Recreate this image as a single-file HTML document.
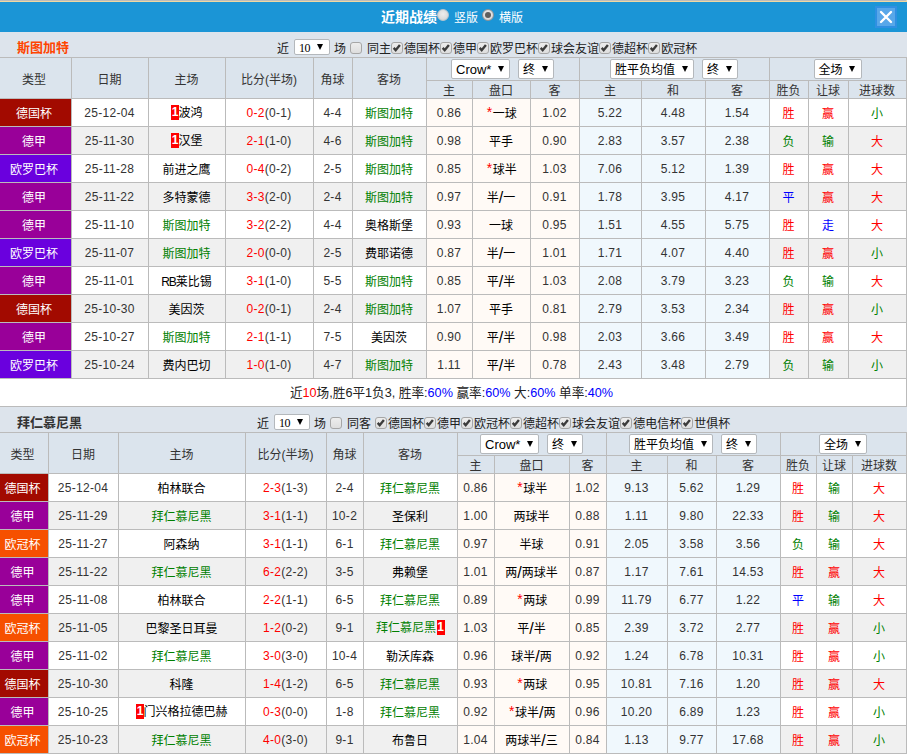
<!DOCTYPE html>
<html lang="zh-CN">
<head>
<meta charset="utf-8">
<title>近期战绩</title>
<style>
html,body{margin:0;padding:0;background:#fff;}
body{width:907px;height:755px;overflow:hidden;position:relative;font-family:"Liberation Sans","Noto Sans CJK SC",sans-serif;font-size:12px;color:#333;}
.topline{height:1px;background:#bcbcbc;border-bottom:1px solid #f0d8a2;border-right:1px solid #f0d8a2;}
.bar{position:relative;height:30px;background:#1b95d6;color:#fff;}
.bar .bt{position:absolute;left:381px;top:5px;font-size:14px;font-weight:bold;line-height:20px;}
.bar .rl{position:absolute;top:6px;font-size:12px;line-height:20px;}
.bar .l1{left:454px;}
.bar .l2{left:499px;}
.bar .rd{position:absolute;top:7px;width:12px;height:12px;border-radius:50%;background:radial-gradient(circle at 50% 40%,#ededed 0,#dcdcdc 60%,#c4c4c4 100%);border:1px solid #b9c6cf;box-sizing:border-box;}
.bar .rd.on{border-color:#8d9499;}
.bar .r1{left:437px;}
.bar .r2{left:482px;}
.bar .rd.on:after{content:"";position:absolute;left:2px;top:2px;width:6px;height:6px;border-radius:50%;background:#5e5e5e;}
.close{position:absolute;left:875px;top:4px;width:22px;height:22px;background:#58a7e9;border:2px solid #2f90e2;box-sizing:border-box;}
.close svg{position:absolute;left:-2px;top:-2px;}
.sec{position:relative;height:25px;background:#dde4ec;}
.sec .name{position:absolute;left:17px;top:7px;font-size:13px;font-weight:bold;line-height:18px;}
.n1{color:#ff4500;}
.n2{color:#333;}
.filt{position:absolute;top:5px;height:25px;line-height:25px;white-space:nowrap;color:#222;}
.f1{left:277px;}
.f2{left:257px;}
.filt span{vertical-align:middle;}
.filt .s-n{margin-left:5px;width:36px;height:16px;font-size:12px;letter-spacing:-0.6px;font-family:"Liberation Serif",serif;top:-3px;margin-right:-1px;}
.filt .f-c{margin-left:5px;}
.filt .f-c + .cb{margin-left:4px;margin-right:5px;}
.filt .f-t2{margin-right:4px;}
.s2{border-top:1px solid #bbb;}
table.t{border-collapse:collapse;table-layout:fixed;margin-left:-1px;width:908px;}
.t th,.t td{border:1px solid #bbb;padding:0 1px 0 0;text-align:center;font-weight:normal;white-space:nowrap;overflow:hidden;}
.t th{background:#dbe4ed;color:#333;}
.t tr.h1{height:23px;}
.t tr.h2{height:18px;}
.t td{height:27px;color:#333;}
.t tr.even td{background:#f0f0f0;}
.t td.lg{color:#fff;padding-right:3px;}
.t tr.h1 th:first-child{padding-right:3px;}
.t td.c-dgb{background:#a20a00 !important;}
.t td.c-dj{background:#990099 !important;}
.t td.c-olb{background:#6a00de !important;}
.t td.c-ogb{background:#f65000 !important;}
.t td.n{letter-spacing:0.3px;}
.t td.me{color:#008000;}
.t td.tm{color:#000;}
.sc{color:#f00;}
.star{color:#f00;font-size:14px;line-height:12px;display:inline-block;vertical-align:-0.5px;width:6.5px;text-align:center;margin-left:1px;position:relative;top:-2px;}
.rc{background:#f00;color:#fff;font-weight:bold;display:inline-block;width:8px;height:15px;line-height:15px;vertical-align:middle;text-align:center;position:relative;top:-2px;left:0.5px;letter-spacing:0;}
.lat{letter-spacing:-1px;}
.sl{font-size:16px;line-height:12px;display:inline-block;width:4.6px;text-align:center;position:relative;top:1px;}
.t td.oa{background:#fffaf6 !important;}
.t td.ob{background:#f0f8fd !important;}
.t td.r{color:#f00;}
.t td.g{color:#008000;}
.t td.b{color:#00f;}
.stat{height:27px;line-height:29px;font-size:12.65px;padding-right:3px;text-align:center;border-right:1px solid #bbb;color:#222;}
.red{color:#f00;}
.blue{color:#00f;}
.sel{display:inline-block;box-sizing:border-box;height:20px;border:1px solid #b4b8bc;border-radius:2px;background:#fff;vertical-align:middle;position:relative;text-align:left;color:#000;}
.sel .st{position:absolute;left:4px;top:1px;line-height:18px;}
.sel .ar{position:absolute;right:5.5px;top:6px;width:0;height:0;border-left:3.75px solid transparent;border-right:3.75px solid transparent;border-top:6.5px solid #000;}
.s-crow{width:59px;font-size:13px;}
.s-crow .st{left:4px;top:0.5px;}

.s-z{width:36px;margin-left:8px;}
.s-avg{width:84px;}
.s-qc{width:48px;}
.s-n .st{line-height:14px;left:4px;top:1.3px;}
.s-n .ar{top:4.5px;right:6px;border-left-width:3px;border-right-width:3px;}
.cb{display:inline-block;width:12px;height:12px;box-sizing:border-box;border:1px solid #a6a6a6;border-radius:3px;background:linear-gradient(#ededed,#dedede);vertical-align:middle;margin:0 1px 0 0;position:relative;top:-2px;}
.cb svg{position:absolute;left:-1px;top:-1px;}
</style>
</head>
<body>
<div class="topline"></div>
<div class="bar"><span class="bt">近期战绩</span><span class="rd r1"></span><span class="rl l1">竖版</span><span class="rd r2 on"></span><span class="rl l2">横版</span>
<span class="close"><svg viewBox="0 0 22 22" width="22" height="22"><path d="M6 6 L16 16 M16 6 L6 16" stroke="#fff" stroke-width="2.4" stroke-linecap="round" fill="none"/></svg></span></div>
<div class="sec s1"><span class="name n1">斯图加特</span><div class="filt f1"><span class="f-j">近</span><span class="sel s-n"><span class="st">10</span><i class="ar"></i></span><span class="f-c">场</span><span class="cb"></span><span class="f-t">同主</span><span class="cb on"><svg viewBox="0 0 12 12" width="12" height="12"><path d="M2.7 5.9 L4.7 8.2 L8.9 3.0" fill="none" stroke="#3c3c3c" stroke-width="2.4"/></svg></span>德国杯<span class="cb on"><svg viewBox="0 0 12 12" width="12" height="12"><path d="M2.7 5.9 L4.7 8.2 L8.9 3.0" fill="none" stroke="#3c3c3c" stroke-width="2.4"/></svg></span>德甲<span class="cb on"><svg viewBox="0 0 12 12" width="12" height="12"><path d="M2.7 5.9 L4.7 8.2 L8.9 3.0" fill="none" stroke="#3c3c3c" stroke-width="2.4"/></svg></span>欧罗巴杯<span class="cb on"><svg viewBox="0 0 12 12" width="12" height="12"><path d="M2.7 5.9 L4.7 8.2 L8.9 3.0" fill="none" stroke="#3c3c3c" stroke-width="2.4"/></svg></span>球会友谊<span class="cb on"><svg viewBox="0 0 12 12" width="12" height="12"><path d="M2.7 5.9 L4.7 8.2 L8.9 3.0" fill="none" stroke="#3c3c3c" stroke-width="2.4"/></svg></span>德超杯<span class="cb on"><svg viewBox="0 0 12 12" width="12" height="12"><path d="M2.7 5.9 L4.7 8.2 L8.9 3.0" fill="none" stroke="#3c3c3c" stroke-width="2.4"/></svg></span>欧冠杯</div></div>
<table class="t" id="t1" cellspacing="0" cellpadding="0">
<colgroup><col style="width:72px"><col style="width:77px"><col style="width:77px"><col style="width:88px"><col style="width:39px"><col style="width:74px"><col style="width:46px"><col style="width:58px"><col style="width:49px"><col style="width:62px"><col style="width:64px"><col style="width:64px"><col style="width:39px"><col style="width:40px"><col style="width:58px"></colgroup>
<tr class="h1">
<th rowspan="2">类型</th>
<th rowspan="2">日期</th>
<th rowspan="2">主场</th>
<th rowspan="2">比分(半场)</th>
<th rowspan="2">角球</th>
<th rowspan="2">客场</th>
<th colspan="3"><span class="sel s-crow"><span class="st">Crow*</span><i class="ar"></i></span><span class="sel s-z"><span class="st">终</span><i class="ar"></i></span></th>
<th colspan="3"><span class="sel s-avg"><span class="st">胜平负均值</span><i class="ar"></i></span><span class="sel s-z"><span class="st">终</span><i class="ar"></i></span></th>
<th colspan="3"><span class="sel s-qc"><span class="st">全场</span><i class="ar"></i></span></th>
</tr>
<tr class="h2"><th>主</th><th>盘口</th><th>客</th><th>主</th><th>和</th><th>客</th><th>胜负</th><th>让球</th><th>进球数</th></tr>
<tr class="odd">
<td class="lg c-dgb">德国杯</td>
<td class="n">25-12-04</td>
<td class="tm"><span class="rc">1</span>波鸿</td>
<td class="n"><span class="sc">0-2</span>(0-1)</td>
<td class="n">4-4</td>
<td class="me">斯图加特</td>
<td class="oa n">0.86</td><td class="oa tm"><span class="star">*</span>一球</td><td class="oa n">1.02</td>
<td class="ob n">5.22</td><td class="ob n">4.48</td><td class="ob n">1.54</td>
<td class="r">胜</td>
<td class="r">赢</td>
<td class="g">小</td>
</tr>
<tr class="even">
<td class="lg c-dj">德甲</td>
<td class="n">25-11-30</td>
<td class="tm"><span class="rc">1</span>汉堡</td>
<td class="n"><span class="sc">2-1</span>(1-0)</td>
<td class="n">4-6</td>
<td class="me">斯图加特</td>
<td class="oa n">0.98</td><td class="oa tm">平手</td><td class="oa n">0.90</td>
<td class="ob n">2.83</td><td class="ob n">3.57</td><td class="ob n">2.38</td>
<td class="g">负</td>
<td class="g">输</td>
<td class="r">大</td>
</tr>
<tr class="odd">
<td class="lg c-olb">欧罗巴杯</td>
<td class="n">25-11-28</td>
<td class="tm">前进之鹰</td>
<td class="n"><span class="sc">0-4</span>(0-2)</td>
<td class="n">2-5</td>
<td class="me">斯图加特</td>
<td class="oa n">0.85</td><td class="oa tm"><span class="star">*</span>球半</td><td class="oa n">1.03</td>
<td class="ob n">7.06</td><td class="ob n">5.12</td><td class="ob n">1.39</td>
<td class="r">胜</td>
<td class="r">赢</td>
<td class="r">大</td>
</tr>
<tr class="even">
<td class="lg c-dj">德甲</td>
<td class="n">25-11-22</td>
<td class="tm">多特蒙德</td>
<td class="n"><span class="sc">3-3</span>(2-0)</td>
<td class="n">2-4</td>
<td class="me">斯图加特</td>
<td class="oa n">0.97</td><td class="oa tm">半<span class="sl">/</span>一</td><td class="oa n">0.91</td>
<td class="ob n">1.78</td><td class="ob n">3.95</td><td class="ob n">4.17</td>
<td class="b">平</td>
<td class="r">赢</td>
<td class="r">大</td>
</tr>
<tr class="odd">
<td class="lg c-dj">德甲</td>
<td class="n">25-11-10</td>
<td class="me">斯图加特</td>
<td class="n"><span class="sc">3-2</span>(2-2)</td>
<td class="n">4-4</td>
<td class="tm">奥格斯堡</td>
<td class="oa n">0.93</td><td class="oa tm">一球</td><td class="oa n">0.95</td>
<td class="ob n">1.51</td><td class="ob n">4.55</td><td class="ob n">5.75</td>
<td class="r">胜</td>
<td class="b">走</td>
<td class="r">大</td>
</tr>
<tr class="even">
<td class="lg c-olb">欧罗巴杯</td>
<td class="n">25-11-07</td>
<td class="me">斯图加特</td>
<td class="n"><span class="sc">2-0</span>(0-0)</td>
<td class="n">2-5</td>
<td class="tm">费耶诺德</td>
<td class="oa n">0.87</td><td class="oa tm">半<span class="sl">/</span>一</td><td class="oa n">1.01</td>
<td class="ob n">1.71</td><td class="ob n">4.07</td><td class="ob n">4.40</td>
<td class="r">胜</td>
<td class="r">赢</td>
<td class="g">小</td>
</tr>
<tr class="odd">
<td class="lg c-dj">德甲</td>
<td class="n">25-11-01</td>
<td class="tm"><span class="lat">RB</span>莱比锡</td>
<td class="n"><span class="sc">3-1</span>(1-0)</td>
<td class="n">5-5</td>
<td class="me">斯图加特</td>
<td class="oa n">0.85</td><td class="oa tm">平<span class="sl">/</span>半</td><td class="oa n">1.03</td>
<td class="ob n">2.08</td><td class="ob n">3.79</td><td class="ob n">3.23</td>
<td class="g">负</td>
<td class="g">输</td>
<td class="r">大</td>
</tr>
<tr class="even">
<td class="lg c-dgb">德国杯</td>
<td class="n">25-10-30</td>
<td class="tm">美因茨</td>
<td class="n"><span class="sc">0-2</span>(0-1)</td>
<td class="n">2-4</td>
<td class="me">斯图加特</td>
<td class="oa n">1.07</td><td class="oa tm">平手</td><td class="oa n">0.81</td>
<td class="ob n">2.79</td><td class="ob n">3.53</td><td class="ob n">2.34</td>
<td class="r">胜</td>
<td class="r">赢</td>
<td class="g">小</td>
</tr>
<tr class="odd">
<td class="lg c-dj">德甲</td>
<td class="n">25-10-27</td>
<td class="me">斯图加特</td>
<td class="n"><span class="sc">2-1</span>(1-1)</td>
<td class="n">7-5</td>
<td class="tm">美因茨</td>
<td class="oa n">0.90</td><td class="oa tm">平<span class="sl">/</span>半</td><td class="oa n">0.98</td>
<td class="ob n">2.03</td><td class="ob n">3.66</td><td class="ob n">3.49</td>
<td class="r">胜</td>
<td class="r">赢</td>
<td class="r">大</td>
</tr>
<tr class="even">
<td class="lg c-olb">欧罗巴杯</td>
<td class="n">25-10-24</td>
<td class="tm">费内巴切</td>
<td class="n"><span class="sc">1-0</span>(1-0)</td>
<td class="n">4-7</td>
<td class="me">斯图加特</td>
<td class="oa n">1.11</td><td class="oa tm">平<span class="sl">/</span>半</td><td class="oa n">0.78</td>
<td class="ob n">2.43</td><td class="ob n">3.48</td><td class="ob n">2.79</td>
<td class="g">负</td>
<td class="g">输</td>
<td class="g">小</td>
</tr>
</table>
<div class="stat">近<span class="red">10</span>场,胜6平1负3, 胜率:<span class="blue">60%</span> 赢率:<span class="blue">60%</span> 大:<span class="blue">60%</span> 单率:<span class="blue">40%</span></div>
<div class="sec s2"><span class="name n2">拜仁慕尼黑</span><div class="filt f2"><span class="f-j">近</span><span class="sel s-n"><span class="st">10</span><i class="ar"></i></span><span class="f-c">场</span><span class="cb"></span><span class="f-t f-t2">同客</span><span class="cb on"><svg viewBox="0 0 12 12" width="12" height="12"><path d="M2.7 5.9 L4.7 8.2 L8.9 3.0" fill="none" stroke="#3c3c3c" stroke-width="2.4"/></svg></span>德国杯<span class="cb on"><svg viewBox="0 0 12 12" width="12" height="12"><path d="M2.7 5.9 L4.7 8.2 L8.9 3.0" fill="none" stroke="#3c3c3c" stroke-width="2.4"/></svg></span>德甲<span class="cb on"><svg viewBox="0 0 12 12" width="12" height="12"><path d="M2.7 5.9 L4.7 8.2 L8.9 3.0" fill="none" stroke="#3c3c3c" stroke-width="2.4"/></svg></span>欧冠杯<span class="cb on"><svg viewBox="0 0 12 12" width="12" height="12"><path d="M2.7 5.9 L4.7 8.2 L8.9 3.0" fill="none" stroke="#3c3c3c" stroke-width="2.4"/></svg></span>德超杯<span class="cb on"><svg viewBox="0 0 12 12" width="12" height="12"><path d="M2.7 5.9 L4.7 8.2 L8.9 3.0" fill="none" stroke="#3c3c3c" stroke-width="2.4"/></svg></span>球会友谊<span class="cb on"><svg viewBox="0 0 12 12" width="12" height="12"><path d="M2.7 5.9 L4.7 8.2 L8.9 3.0" fill="none" stroke="#3c3c3c" stroke-width="2.4"/></svg></span>德电信杯<span class="cb on"><svg viewBox="0 0 12 12" width="12" height="12"><path d="M2.7 5.9 L4.7 8.2 L8.9 3.0" fill="none" stroke="#3c3c3c" stroke-width="2.4"/></svg></span>世俱杯</div></div>
<table class="t" id="t2" cellspacing="0" cellpadding="0">
<colgroup><col style="width:49px"><col style="width:70px"><col style="width:127px"><col style="width:81px"><col style="width:37px"><col style="width:94px"><col style="width:37px"><col style="width:75px"><col style="width:37px"><col style="width:61px"><col style="width:49px"><col style="width:64px"><col style="width:36px"><col style="width:36px"><col style="width:54px"></colgroup>
<tr class="h1">
<th rowspan="2">类型</th>
<th rowspan="2">日期</th>
<th rowspan="2">主场</th>
<th rowspan="2">比分(半场)</th>
<th rowspan="2">角球</th>
<th rowspan="2">客场</th>
<th colspan="3"><span class="sel s-crow"><span class="st">Crow*</span><i class="ar"></i></span><span class="sel s-z"><span class="st">终</span><i class="ar"></i></span></th>
<th colspan="3"><span class="sel s-avg"><span class="st">胜平负均值</span><i class="ar"></i></span><span class="sel s-z"><span class="st">终</span><i class="ar"></i></span></th>
<th colspan="3"><span class="sel s-qc"><span class="st">全场</span><i class="ar"></i></span></th>
</tr>
<tr class="h2"><th>主</th><th>盘口</th><th>客</th><th>主</th><th>和</th><th>客</th><th>胜负</th><th>让球</th><th>进球数</th></tr>
<tr class="odd">
<td class="lg c-dgb">德国杯</td>
<td class="n">25-12-04</td>
<td class="tm">柏林联合</td>
<td class="n"><span class="sc">2-3</span>(1-3)</td>
<td class="n">2-4</td>
<td class="me">拜仁慕尼黑</td>
<td class="oa n">0.86</td><td class="oa tm"><span class="star">*</span>球半</td><td class="oa n">1.02</td>
<td class="ob n">9.13</td><td class="ob n">5.62</td><td class="ob n">1.29</td>
<td class="r">胜</td>
<td class="g">输</td>
<td class="r">大</td>
</tr>
<tr class="even">
<td class="lg c-dj">德甲</td>
<td class="n">25-11-29</td>
<td class="me">拜仁慕尼黑</td>
<td class="n"><span class="sc">3-1</span>(1-1)</td>
<td class="n">10-2</td>
<td class="tm">圣保利</td>
<td class="oa n">1.00</td><td class="oa tm">两球半</td><td class="oa n">0.88</td>
<td class="ob n">1.11</td><td class="ob n">9.80</td><td class="ob n">22.33</td>
<td class="r">胜</td>
<td class="g">输</td>
<td class="r">大</td>
</tr>
<tr class="odd">
<td class="lg c-ogb">欧冠杯</td>
<td class="n">25-11-27</td>
<td class="tm">阿森纳</td>
<td class="n"><span class="sc">3-1</span>(1-1)</td>
<td class="n">6-1</td>
<td class="me">拜仁慕尼黑</td>
<td class="oa n">0.97</td><td class="oa tm">半球</td><td class="oa n">0.91</td>
<td class="ob n">2.05</td><td class="ob n">3.58</td><td class="ob n">3.56</td>
<td class="g">负</td>
<td class="g">输</td>
<td class="r">大</td>
</tr>
<tr class="even">
<td class="lg c-dj">德甲</td>
<td class="n">25-11-22</td>
<td class="me">拜仁慕尼黑</td>
<td class="n"><span class="sc">6-2</span>(2-2)</td>
<td class="n">3-5</td>
<td class="tm">弗赖堡</td>
<td class="oa n">1.01</td><td class="oa tm">两<span class="sl">/</span>两球半</td><td class="oa n">0.87</td>
<td class="ob n">1.17</td><td class="ob n">7.61</td><td class="ob n">14.53</td>
<td class="r">胜</td>
<td class="r">赢</td>
<td class="r">大</td>
</tr>
<tr class="odd">
<td class="lg c-dj">德甲</td>
<td class="n">25-11-08</td>
<td class="tm">柏林联合</td>
<td class="n"><span class="sc">2-2</span>(1-1)</td>
<td class="n">6-5</td>
<td class="me">拜仁慕尼黑</td>
<td class="oa n">0.89</td><td class="oa tm"><span class="star">*</span>两球</td><td class="oa n">0.99</td>
<td class="ob n">11.79</td><td class="ob n">6.77</td><td class="ob n">1.22</td>
<td class="b">平</td>
<td class="g">输</td>
<td class="r">大</td>
</tr>
<tr class="even">
<td class="lg c-ogb">欧冠杯</td>
<td class="n">25-11-05</td>
<td class="tm">巴黎圣日耳曼</td>
<td class="n"><span class="sc">1-2</span>(0-2)</td>
<td class="n">9-1</td>
<td class="me">拜仁慕尼黑<span class="rc">1</span></td>
<td class="oa n">1.03</td><td class="oa tm">平<span class="sl">/</span>半</td><td class="oa n">0.85</td>
<td class="ob n">2.39</td><td class="ob n">3.72</td><td class="ob n">2.77</td>
<td class="r">胜</td>
<td class="r">赢</td>
<td class="g">小</td>
</tr>
<tr class="odd">
<td class="lg c-dj">德甲</td>
<td class="n">25-11-02</td>
<td class="me">拜仁慕尼黑</td>
<td class="n"><span class="sc">3-0</span>(3-0)</td>
<td class="n">10-4</td>
<td class="tm">勒沃库森</td>
<td class="oa n">0.96</td><td class="oa tm">球半<span class="sl">/</span>两</td><td class="oa n">0.92</td>
<td class="ob n">1.24</td><td class="ob n">6.78</td><td class="ob n">10.31</td>
<td class="r">胜</td>
<td class="r">赢</td>
<td class="g">小</td>
</tr>
<tr class="even">
<td class="lg c-dgb">德国杯</td>
<td class="n">25-10-30</td>
<td class="tm">科隆</td>
<td class="n"><span class="sc">1-4</span>(1-2)</td>
<td class="n">6-5</td>
<td class="me">拜仁慕尼黑</td>
<td class="oa n">0.93</td><td class="oa tm"><span class="star">*</span>两球</td><td class="oa n">0.95</td>
<td class="ob n">10.81</td><td class="ob n">7.16</td><td class="ob n">1.20</td>
<td class="r">胜</td>
<td class="r">赢</td>
<td class="r">大</td>
</tr>
<tr class="odd">
<td class="lg c-dj">德甲</td>
<td class="n">25-10-25</td>
<td class="tm"><span class="rc">1</span>门兴格拉德巴赫</td>
<td class="n"><span class="sc">0-3</span>(0-0)</td>
<td class="n">1-8</td>
<td class="me">拜仁慕尼黑</td>
<td class="oa n">0.92</td><td class="oa tm"><span class="star">*</span>球半<span class="sl">/</span>两</td><td class="oa n">0.96</td>
<td class="ob n">10.20</td><td class="ob n">6.89</td><td class="ob n">1.23</td>
<td class="r">胜</td>
<td class="r">赢</td>
<td class="g">小</td>
</tr>
<tr class="even">
<td class="lg c-ogb">欧冠杯</td>
<td class="n">25-10-23</td>
<td class="me">拜仁慕尼黑</td>
<td class="n"><span class="sc">4-0</span>(3-0)</td>
<td class="n">9-1</td>
<td class="tm">布鲁日</td>
<td class="oa n">1.04</td><td class="oa tm">两球半<span class="sl">/</span>三</td><td class="oa n">0.84</td>
<td class="ob n">1.13</td><td class="ob n">9.77</td><td class="ob n">17.68</td>
<td class="r">胜</td>
<td class="r">赢</td>
<td class="g">小</td>
</tr>
</table>
</body>
</html>
